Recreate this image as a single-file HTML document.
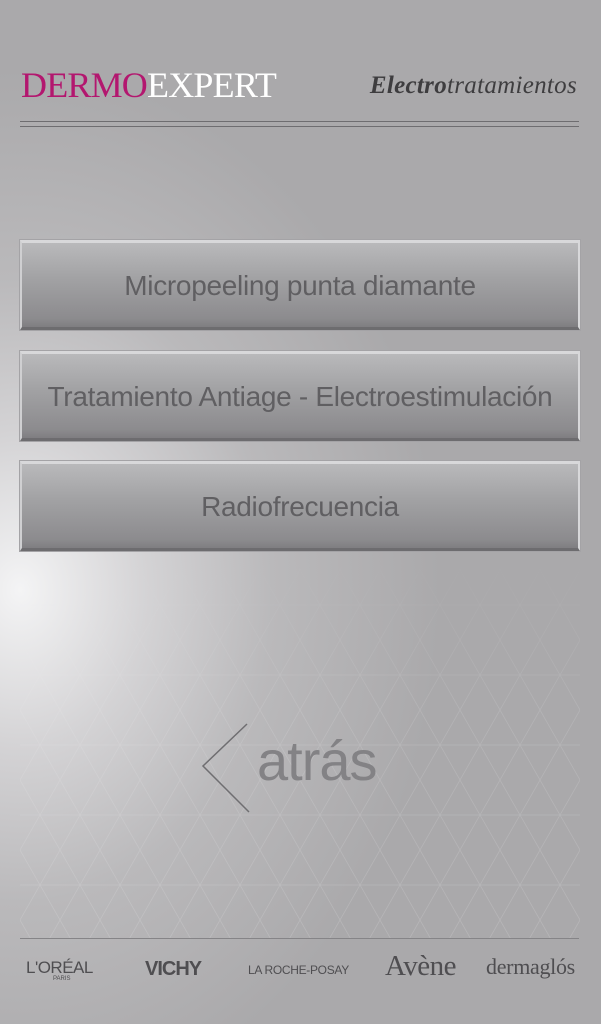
<!DOCTYPE html>
<html><head><meta charset="utf-8"><style>
html,body{margin:0;padding:0}
body{width:601px;height:1024px;overflow:hidden;position:relative;font-family:"Liberation Sans",sans-serif;
background:radial-gradient(ellipse 420px 520px at 20px 590px,#f4f4f5 0%,#d4d3d5 30%,#bab9bb 60%,#aaa9ab 100%) ,#a9a8aa;}
.logo{position:absolute;left:21px;top:64px;font-family:"Liberation Serif",serif;font-size:36px;letter-spacing:-0.8px;line-height:42px}
.logo .a{color:#b3176f}.logo .b{color:#fff}
.sub{position:absolute;right:24px;top:72px;font-family:"Liberation Serif",serif;font-style:italic;font-size:25px;color:#3e3d3f;letter-spacing:0.3px}
.hr{position:absolute;left:20px;width:559px;height:1px;background:#6e6d70}
.btn{position:absolute;left:20px;width:560px;height:90px;box-sizing:border-box;
background:linear-gradient(#b9b9bb,#a3a3a5 40%,#8c8b8e 90%,#7f7e81);
border-top:3px solid #d8d8da;border-left:2px solid #cfcfd1;border-right:2px solid #d8d8da;border-bottom:3px solid #6d6c6f;
box-shadow:0 0 0 1px #a4a3a6;
text-align:center;line-height:86px;font-size:28px;color:#605f62;font-weight:normal;letter-spacing:-0.3px}
.atras{position:absolute;left:257px;top:728px;font-size:56px;color:#838285;letter-spacing:-1px}
.brands{position:absolute;top:952px;font-family:"Liberation Sans",sans-serif;color:#4f4e51}
</style></head><body>
<svg style="position:absolute;left:0;top:0" width="601" height="1024">
<defs>
<pattern id="tri" width="40" height="70" patternUnits="userSpaceOnUse" x="20" y="570">
<path d="M0 0 L20 35 L40 0 M0 70 L20 35 L40 70 M0 35 H40" stroke="#ececee" stroke-width="0.7" fill="none"/>
</pattern>
<linearGradient id="fade" x1="0" y1="0" x2="0" y2="1">
<stop offset="0" stop-color="#fff" stop-opacity="0"/>
<stop offset="0.4" stop-color="#fff" stop-opacity="0.5"/>
<stop offset="1" stop-color="#fff" stop-opacity="0.6"/>
</linearGradient>
<mask id="m"><rect x="0" y="560" width="601" height="380" fill="url(#fade)"/></mask>
</defs>
<rect x="20" y="560" width="560" height="378" fill="url(#tri)" mask="url(#m)" opacity="0.35"/>
<path d="M247 724 L203 766 L249 812" stroke="#6f6e71" stroke-width="1.5" fill="none"/>
</svg>
<div class="logo"><span class="a">DERMO</span><span class="b">EXPERT</span></div>
<div class="sub"><b>Electro</b>tratamientos</div>
<div class="hr" style="top:121px"></div>
<div class="hr" style="top:126px"></div>
<div class="btn" style="top:240px">Micropeeling punta diamante</div>
<div class="btn" style="top:351px">Tratamiento Antiage - Electroestimulación</div>
<div class="btn" style="top:461px">Radiofrecuencia</div>
<div class="atras">atrás</div>
<div class="hr" style="top:938px;background:#858487"></div>
<div class="brands" style="left:26px;font-size:17px;letter-spacing:-0.5px;top:958px">L'ORÉAL</div>
<div class="brands" style="left:53px;top:976px;font-size:6px">PARIS</div>
<div class="brands" style="left:145px;font-size:20px;font-weight:bold;letter-spacing:-1px;top:958px">VICHY</div>
<div class="brands" style="left:248px;font-size:12px;top:963px;letter-spacing:-0.3px">LA ROCHE-POSAY</div>
<div class="brands" style="left:385px;font-family:'Liberation Serif',serif;font-size:29px;top:950px;letter-spacing:-0.5px">Avène</div>
<div class="brands" style="left:486px;font-family:'Liberation Serif',serif;font-size:22px;top:954px;letter-spacing:-0.3px">dermaglós</div>
</body></html>
